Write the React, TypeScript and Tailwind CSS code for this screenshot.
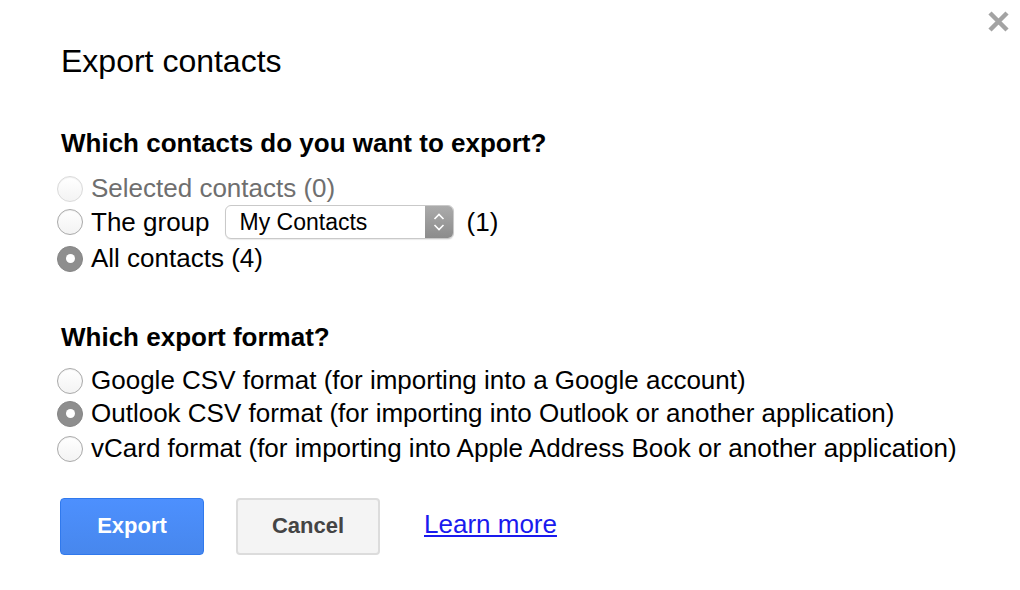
import React, { useState } from 'react';

function Radio({ checked, disabled }: { checked?: boolean; disabled?: boolean }) {
  if (checked) {
    return (
      <span className="w-[26px] h-[26px] shrink-0 rounded-full bg-[#8e8e8e] border border-[#858585] flex items-center justify-center">
        <span className="w-[9px] h-[9px] rounded-full bg-white" />
      </span>
    );
  }
  return (
    <span
      className={
        'w-[26px] h-[26px] shrink-0 rounded-full border bg-gradient-to-b from-white to-[#f3f3f3] shadow-[inset_0_1px_1px_rgba(0,0,0,0.06)] ' +
        (disabled ? 'border-[#dadada]' : 'border-[#a9a9a9]')
      }
    />
  );
}

function Option({
  checked,
  disabled,
  children,
  onClick,
  className = '',
}: {
  checked?: boolean;
  disabled?: boolean;
  children: React.ReactNode;
  onClick?: () => void;
  className?: string;
}) {
  return (
    <div
      className={
        'flex items-center gap-[8px] h-[33px] -ml-[4px] ' +
        (disabled ? 'text-[#6f6f6f] ' : 'text-black ') +
        className
      }
      onClick={disabled ? undefined : onClick}
    >
      <Radio checked={checked} disabled={disabled} />
      <span className="text-[26px] leading-[33px] whitespace-nowrap">{children}</span>
    </div>
  );
}

export default function App() {
  const [which, setWhich] = useState('all');
  const [format, setFormat] = useState('outlook');

  return (
    <div className="w-[1020px] h-[590px] bg-white relative overflow-hidden font-['Liberation_Sans',Arial,sans-serif] text-black">
      {/* close */}
      <button className="absolute top-[10px] left-[987px] w-[23px] h-[23px]">
        <svg viewBox="0 0 23 23" className="w-[23px] h-[23px]">
          <path d="M3 3 L20 20 M20 3 L3 20" stroke="#a3a3a3" strokeWidth="4.5" strokeLinecap="butt" />
        </svg>
      </button>

      <div className="pl-[61px] pt-[43px]">
        <h1 className="text-[32px] leading-[36px] font-normal">Export contacts</h1>

        <h2 className="mt-[47px] text-[26px] leading-[34px] font-bold">Which contacts do you want to export?</h2>
        <div className="mt-[12px]">
          <Option disabled>Selected contacts (0)</Option>
          <div className="flex items-center">
            <Option checked={which === 'group'} onClick={() => setWhich('group')}>
              The group
            </Option>
            <div className="ml-[15px] w-[229px] h-[34px] flex rounded-[6px] border border-[#c9c9c9] bg-white shadow-[0_1px_1px_rgba(0,0,0,0.08)] overflow-hidden">
              <span className="flex-1 pl-[14px] text-[23px] leading-[32px] text-black">My Contacts</span>
              <span className="w-[28px] bg-gradient-to-b from-[#ababab] to-[#8c8c8c] flex items-center justify-center">
                <svg viewBox="0 0 14 22" className="w-[14px] h-[22px]">
                  <path d="M2.5 8 L7 3.5 L11.5 8 M2.5 14 L7 18.5 L11.5 14" fill="none" stroke="white" strokeWidth="1.6" />
                </svg>
              </span>
            </div>
            <span className="ml-[13px] text-[26px] leading-[33px]">(1)</span>
          </div>
          <Option checked={which === 'all'} onClick={() => setWhich('all')} className="mt-[3px]">
            All contacts (4)
          </Option>
        </div>

        <h2 className="mt-[45px] text-[26px] leading-[34px] font-bold">Which export format?</h2>
        <div className="mt-[10px]">
          <Option checked={format === 'google'} onClick={() => setFormat('google')}>
            Google CSV format (for importing into a Google account)
          </Option>
          <Option checked={format === 'outlook'} onClick={() => setFormat('outlook')}>
            Outlook CSV format (for importing into Outlook or another application)
          </Option>
          <Option checked={format === 'vcard'} onClick={() => setFormat('vcard')} className="mt-[2px]">
            vCard format (for importing into Apple Address Book or another application)
          </Option>
        </div>

        <div className="mt-[33px] -ml-[1px] flex items-center">
          <button className="w-[144px] h-[57px] pb-[3px] rounded-[4px] border border-[#3079ed] bg-gradient-to-b from-[#4d90fe] to-[#4787ed] text-white text-[22px] font-bold">
            Export
          </button>
          <button className="ml-[32px] w-[144px] h-[57px] pb-[3px] rounded-[4px] border-2 border-[#dcdcdc] bg-[#f4f4f4] text-[#444] text-[22px] font-bold">
            Cancel
          </button>
          <a href="#" className="ml-[44px] mb-[6px] text-[26px] leading-[34px] text-[#1a1aee] underline">
            Learn more
          </a>
        </div>
      </div>
    </div>
  );
}
